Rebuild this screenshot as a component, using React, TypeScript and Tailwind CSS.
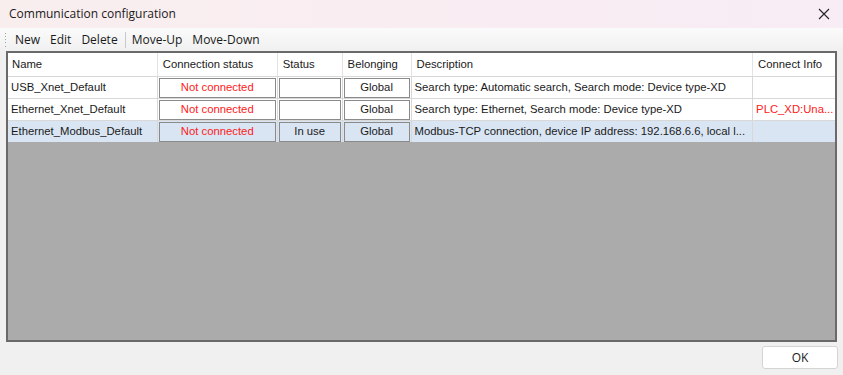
import React from "react";

interface Row {
  name: string;
  conn: string;
  status: string;
  belonging: string;
  desc: string;
  info: string;
  selected?: boolean;
}

const rows: Row[] = [
  {
    name: "USB_Xnet_Default",
    conn: "Not connected",
    status: "",
    belonging: "Global",
    desc: "Search type: Automatic search, Search mode: Device type-XD",
    info: "",
  },
  {
    name: "Ethernet_Xnet_Default",
    conn: "Not connected",
    status: "",
    belonging: "Global",
    desc: "Search type: Ethernet, Search mode: Device type-XD",
    info: "PLC_XD:Una...",
  },
  {
    name: "Ethernet_Modbus_Default",
    conn: "Not connected",
    status: "In use",
    belonging: "Global",
    desc: "Modbus-TCP connection, device IP address: 192.168.6.6, local l...",
    info: "",
    selected: true,
  },
];

const uiFont = { fontFamily: '"Open Sans", "Noto Sans", sans-serif' };
const gridFont = { fontFamily: '"Liberation Sans", Arial, sans-serif' };

function CellButton({ text, red }: { text: string; red?: boolean }) {
  return (
    <div
      className={`mx-[1px] flex h-[20px] w-full items-center justify-center border border-[#8a8a8a] ${
        red ? "text-[#ff2020]" : "text-[#1a1a1a]"
      }`}
    >
      {text}
    </div>
  );
}

export default function App() {
  return (
    <div className="flex h-[375px] w-[843px] flex-col overflow-hidden bg-[#f0f0f0] text-[#1a1a1a]">
      {/* Title bar */}
      <div
        className="flex h-[28px] items-center justify-between bg-gradient-to-r from-[#f9eeee] to-[#f8ecf5] pl-[9px] pr-[13px] text-[12px]"
        style={uiFont}
      >
        <span>Communication configuration</span>
        <svg width="12" height="12" viewBox="0 0 12 12" className="text-[#222]">
          <path d="M1 1L11 11M11 1L1 11" stroke="currentColor" strokeWidth="1.1" />
        </svg>
      </div>

      {/* Toolbar */}
      <div
        className="flex h-[23px] items-center bg-gradient-to-b from-[#fbfbfb] to-[#f0f0f0] pl-[5px] text-[12px]"
        style={uiFont}
      >
        <div className="mr-[8px] flex h-[14px] w-[2px] flex-col justify-between">
          {[0, 1, 2, 3, 4].map((i) => (
            <div key={i} className="h-[1px] w-[1px] bg-[#a0a0a0]" />
          ))}
        </div>
        <span>New</span>
        <span className="ml-[10px]">Edit</span>
        <span className="ml-[10px]">Delete</span>
        <div className="ml-[7px] mr-[6px] h-[16px] w-[1px] bg-[#c8c8c8]" />
        <span>Move-Up</span>
        <span className="ml-[10px]">Move-Down</span>
      </div>

      {/* Grid */}
      <div
        className="mx-[6px] flex h-[291px] flex-col border-2 border-[#6a6a6a] bg-[#ababab] text-[11.3px]"
        style={gridFont}
      >
        <div className="flex h-[23px] bg-white">
          <div className="flex w-[150px] items-center border-r border-[#e3e3e3] pl-[4px]">Name</div>
          <div className="flex w-[120px] items-center border-r border-[#e3e3e3] pl-[5px]">Connection status</div>
          <div className="flex w-[65px] items-center border-r border-[#e3e3e3] pl-[5px]">Status</div>
          <div className="flex w-[69px] items-center border-r border-[#e3e3e3] pl-[5px]">Belonging</div>
          <div className="flex w-[342px] items-center border-r border-[#e3e3e3] pl-[5px]">Description</div>
          <div className="flex w-[82px] items-center pl-[5px]">Connect Info</div>
        </div>
        {rows.map((r) => (
          <div
            key={r.name}
            className={`flex h-[22px] border-t border-[#d8d8d8] ${r.selected ? "bg-[#d9e5f3]" : "bg-white"}`}
          >
            <div className="flex w-[150px] items-center border-r border-[#d8d8d8] pl-[3px]">{r.name}</div>
            <div className="flex w-[120px] items-center border-r border-[#d8d8d8]">
              <CellButton text={r.conn} red />
            </div>
            <div className="flex w-[65px] items-center border-r border-[#d8d8d8]">
              <CellButton text={r.status} />
            </div>
            <div className="flex w-[69px] items-center border-r border-[#d8d8d8]">
              <CellButton text={r.belonging} />
            </div>
            <div className="flex w-[342px] items-center border-r border-[#d8d8d8] pl-[3px] whitespace-nowrap">
              {r.desc}
            </div>
            <div className="flex w-[82px] items-center pl-[3px] text-[#ff2020] whitespace-nowrap">{r.info}</div>
          </div>
        ))}
      </div>

      {/* Footer */}
      <div className="flex flex-1 items-start justify-end pr-[5px] pt-[4px]">
        <button
          className="h-[23px] w-[76px] rounded-[3px] border border-[#d4d4d4] bg-white text-[12px] text-[#1a1a1a]"
          style={uiFont}
        >
          OK
        </button>
      </div>
    </div>
  );
}
